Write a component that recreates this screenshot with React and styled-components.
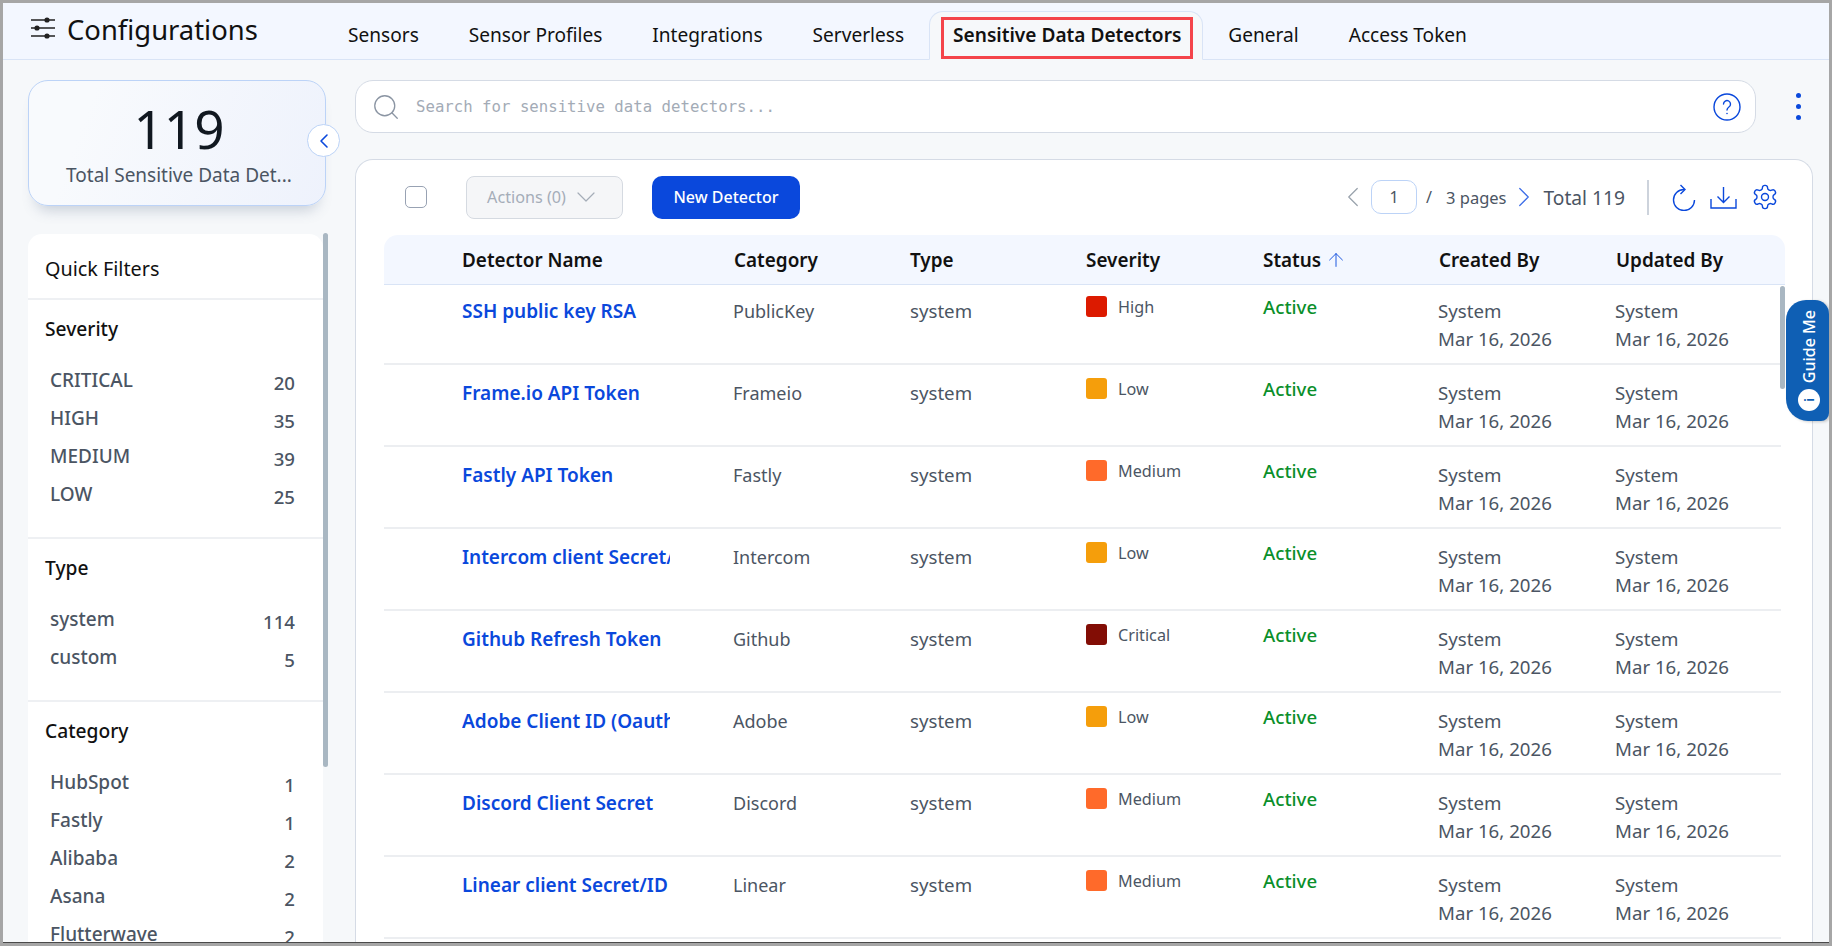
import React from 'react'
import styled, { createGlobalStyle } from 'styled-components'
import { ChevronLeft, ChevronRight, ChevronDown, Search, ArrowUp } from 'lucide-react'

const BLUE = '#0a48dc'
const LINE = '#d5dbe5'

const GlobalStyle = createGlobalStyle`
  html, body { margin: 0; padding: 0; height: 100%; overflow: hidden; }
  body { font-family: "Noto Sans", sans-serif; color: #111; }
  * { box-sizing: border-box; }
`

const Frame = styled.div`
  width: 1832px;
  height: 946px;
  border: 3px solid #a6a6a6;
  background: #f6f8fa;
  display: flex;
  flex-direction: column;
  overflow: hidden;
  position: relative;
`

const BottomEdge = styled.div`
  position: absolute;
  left: 0;
  right: 0;
  bottom: 0;
  height: 1px;
  background: #4a4a4a;
`

const Header = styled.header`
  flex: none;
  height: 57px;
  background: #f3f7ff;
  border-bottom: 1px solid #d9e4f6;
  display: flex;
  align-items: flex-end;
  padding-left: 27px;
`

const Brand = styled.div`
  width: 293px;
  height: 56px;
  display: flex;
  align-items: flex-start;
  gap: 11px;
  padding-top: 9px;
  font-size: 27.4px;
  line-height: 36px;
  white-space: nowrap;
  svg {
    margin-top: 3px;
  }
`

const Tabs = styled.nav`
  display: flex;
  align-items: flex-end;
  height: 49px;
`

const Tab = styled.div`
  height: 49px;
  margin-bottom: -1px;
  padding-bottom: 2px;
  display: flex;
  align-items: center;
  justify-content: center;
  padding-left: ${p => (p.$active ? '11px' : '25px')};
  padding-right: ${p => (p.$active ? '9px' : '25px')};
  font-size: 19.1px;
  font-weight: ${p => (p.$active ? 600 : 400)};
  white-space: nowrap;
  ${p =>
    p.$active &&
    `
    background: #f6f8fa;
    border: 1px solid #d9e4f6;
    border-bottom-color: #f6f8fa;
    border-radius: 14px 14px 0 0;
    padding-bottom: 0;
  `}
`

const RedBox = styled.span`
  border: 3px solid #f4444a;
  height: 42px;
  margin-top: 4px;
  padding: 0 9px 3px 9px;
  display: flex;
  align-items: center;
  line-height: 1;
`

const Body = styled.div`
  flex: 1;
  min-height: 0;
  display: flex;
  padding: 20px 17px 0 25px;
  gap: 26px;
`

const Side = styled.aside`
  width: 301px;
  flex: none;
  display: flex;
  flex-direction: column;
  position: relative;
`

const TotalCard = styled.div`
  width: 298px;
  height: 126px;
  flex: none;
  border: 1px solid #bcd3f7;
  border-radius: 20px;
  background: linear-gradient(110deg, #f8fafd 20%, #eef2fc 100%);
  box-shadow: 0 12px 14px -8px rgba(90, 110, 140, 0.3);
  display: flex;
  flex-direction: column;
  align-items: center;
  padding: 14px 0 0 4px;
`

const TotalNumber = styled.div`
  font-size: 53px;
  line-height: 68px;
  color: #111820;
`

const TotalLabel = styled.div`
  font-size: 19px;
  line-height: 24px;
  color: #4b5563;
`

const Collapse = styled.button`
  position: absolute;
  left: 279px;
  top: 44px;
  width: 33px;
  height: 33px;
  border-radius: 50%;
  border: 1px solid #bcd3f7;
  background: #fff;
  color: ${BLUE};
  display: flex;
  align-items: center;
  justify-content: center;
  padding: 0;
`

const FilterPanel = styled.div`
  margin-top: 28px;
  width: 295px;
  flex: 1;
  min-height: 0;
  background: #fff;
  border-radius: 14px 14px 0 0;
  overflow: hidden;
`

const SideThumb = styled.div`
  position: absolute;
  left: 295px;
  top: 153px;
  width: 5px;
  height: 534px;
  background: #a9b7c2;
  border-radius: 3px;
`

const QuickTitle = styled.div`
  height: 66px;
  padding: 23px 0 0 17px;
  font-size: 19.8px;
  line-height: 24px;
  border-bottom: 2px solid #eef0f3;
`

const FilterGroup = styled.section`
  padding: 17px 28px 0 17px;
  height: ${p => p.$height}px;
  border-bottom: 2px solid #eef0f3;
`

const GroupTitle = styled.div`
  font-size: 19.2px;
  font-weight: 500;
  line-height: 24px;
  margin-bottom: 27px;
`

const FilterRow = styled.div`
  display: flex;
  justify-content: space-between;
  height: 38px;
  padding-left: 5px;
  font-size: 19px;
  font-weight: 500;
  line-height: 24px;
  color: #4b5563;
`

const Count = styled.span`
  font-size: 18.6px;
  padding-top: 3px;
`

const Main = styled.main`
  flex: 1;
  min-width: 0;
  display: flex;
  flex-direction: column;
`

const SearchRow = styled.div`
  display: flex;
  align-items: center;
  flex: none;
`

const SearchBar = styled.div`
  width: 1401px;
  height: 53px;
  border: 1px solid ${LINE};
  border-radius: 18px;
  background: #fff;
  display: flex;
  align-items: center;
  padding: 0 14px 0 15px;
  color: #8b95a3;
`

const Placeholder = styled.span`
  flex: 1;
  margin-left: 15px;
  font-family: "DejaVu Sans Mono", monospace;
  font-size: 15.7px;
  color: #a3abb6;
`

const Dots = styled.div`
  margin-left: 40px;
  display: flex;
  flex-direction: column;
  gap: 6px;
  i {
    width: 5px;
    height: 5px;
    border-radius: 50%;
    background: ${BLUE};
  }
`

const TableCard = styled.div`
  margin-top: 26px;
  width: 1458px;
  flex: 1;
  min-height: 0;
  background: #fff;
  border: 1px solid ${LINE};
  border-bottom: 0;
  border-radius: 18px 18px 0 0;
  padding: 0 27px 0 28px;
  overflow: hidden;
  position: relative;
`

const Toolbar = styled.div`
  height: 75px;
  display: flex;
  align-items: center;
  padding-bottom: 1px;
`

const Checkbox = styled.span`
  width: 22px;
  height: 22px;
  margin-left: 21px;
  border: 1px solid #98a2b3;
  border-radius: 5px;
`

const ActionsButton = styled.div`
  width: 157px;
  height: 43px;
  margin-left: 39px;
  border: 1px solid #d5dae1;
  border-radius: 8px;
  background: #f5f6f8;
  color: #a5adb8;
  font-size: 16.2px;
  display: flex;
  align-items: center;
  justify-content: center;
  gap: 4px;
`

const NewButton = styled.div`
  width: 148px;
  height: 43px;
  margin-left: 29px;
  border-radius: 10px;
  background: ${BLUE};
  color: #fff;
  font-size: 16px;
  font-weight: 500;
  display: flex;
  align-items: center;
  justify-content: center;
`

const Pager = styled.div`
  margin-left: auto;
  display: flex;
  align-items: center;
  color: #4b5563;
  svg.chevron {
    margin: 0 -7px;
  }
`

const PageInput = styled.span`
  width: 46px;
  height: 34px;
  margin: 0 9px 0 8px;
  border: 1px solid #bcd3f7;
  border-radius: 10px;
  font-size: 16px;
  display: flex;
  align-items: center;
  justify-content: center;
`

const Slash = styled.span`
  font-size: 16.2px;
  margin-right: 14px;
`

const PagesText = styled.span`
  font-size: 16.5px;
  margin-right: 7px;
`

const TotalText = styled.span`
  font-size: 19.2px;
  margin-left: 10px;
`

const Divider = styled.span`
  width: 2px;
  height: 35px;
  background: #cdd3dc;
  margin: 0 23px 0 22px;
`

const IconGroup = styled.div`
  display: flex;
  align-items: center;
  gap: 14px;
  margin-right: 6px;
`

const COLUMNS = '78px 272px 176px 176px 177px 176px 177px 1fr'

const HeadRow = styled.div`
  display: grid;
  grid-template-columns: ${COLUMNS};
  height: 50px;
  align-items: center;
  background: #f3f7ff;
  border-bottom: 1px solid #d9e4f6;
  border-radius: 14px 14px 0 0;
  font-size: 18.9px;
  font-weight: 600;
`

const HeadCell = styled.div`
  grid-column: ${p => p.$col};
  display: flex;
  align-items: center;
  gap: 4px;
`

const Row = styled.div`
  display: grid;
  grid-template-columns: ${COLUMNS};
  width: 1397px;
  height: 82px;
  border-bottom: 2px solid #eceef1;
  font-size: 18.67px;
  line-height: 28px;
  color: #4b5563;
  padding-top: 14px;
  ${HeadRow} + & {
    height: 80px;
    padding-top: 12px;
  }
`

const NameCell = styled.div`
  grid-column: 2;
  width: 208px;
  color: ${BLUE};
  font-size: 19px;
  font-weight: 600;
  white-space: nowrap;
  overflow: hidden;
`

const CategoryCell = styled.div`
  font-size: 18px;
  margin-left: -1px;
`

const SeverityCell = styled.div`
  display: flex;
  align-items: flex-start;
  gap: 11px;
  font-size: 16.2px;
  line-height: 22px;
  color: #4b5563;
  margin-top: -1px;
`

const Swatch = styled.span`
  width: 21px;
  height: 21px;
  border-radius: 3px;
  background: ${p => p.$color};
`

const Status = styled.div`
  color: #0a8f2a;
  font-weight: 500;
  margin-top: -4px;
`

const PersonCell = styled.div`
  margin-left: -1px;
`

const TableThumb = styled.div`
  position: absolute;
  right: 27px;
  top: 126px;
  width: 5px;
  height: 103px;
  background: #a9b7c2;
  border-radius: 3px;
`

const GuideMe = styled.div`
  position: absolute;
  right: 0;
  top: 297px;
  width: 43px;
  height: 121px;
  padding: 10px 0 0 3px;
  background: #0f5fb4;
  border-radius: 20px 14px 8px 22px;
  box-shadow: 2px 1px 3px rgba(0, 0, 0, 0.2);
  color: #fff;
  display: flex;
  flex-direction: column;
  align-items: center;
  gap: 6px;
`

const GuideLabel = styled.span`
  writing-mode: vertical-rl;
  transform: rotate(180deg);
  font-size: 16px;
  font-weight: 500;
  line-height: 20px;
  white-space: nowrap;
`

const InfoDot = styled.span`
  width: 22px;
  height: 22px;
  flex: none;
  border-radius: 50%;
  background: #fff;
  color: #0f5fb4;
  font-size: 12px;
  font-weight: 700;
  display: flex;
  align-items: center;
  justify-content: center;
  transform: rotate(-90deg);
`

const SEVERITY = {
  High: '#dc1a00',
  Low: '#f59e0b',
  Medium: '#ff6a2a',
  Critical: '#820d05',
}

const DETECTORS = [
  ['SSH public key RSA', 'PublicKey', 'High'],
  ['Frame.io API Token', 'Frameio', 'Low'],
  ['Fastly API Token', 'Fastly', 'Medium'],
  ['Intercom client Secret/ID', 'Intercom', 'Low'],
  ['Github Refresh Token', 'Github', 'Critical'],
  ['Adobe Client ID (Oauth)', 'Adobe', 'Low'],
  ['Discord Client Secret', 'Discord', 'Medium'],
  ['Linear client Secret/ID', 'Linear', 'Medium'],
]

const FILTERS = [
  { title: 'Severity', height: 239, items: [['CRITICAL', 20], ['HIGH', 35], ['MEDIUM', 39], ['LOW', 25]] },
  { title: 'Type', height: 163, items: [['system', 114], ['custom', 5]] },
  {
    title: 'Category',
    height: 300,
    items: [['HubSpot', 1], ['Fastly', 1], ['Alibaba', 2], ['Asana', 2], ['Flutterwave', 2]],
  },
]

const TABS = ['Sensors', 'Sensor Profiles', 'Integrations', 'Serverless', 'Sensitive Data Detectors', 'General', 'Access Token']

const SlidersIcon = () => (
  <svg width="26" height="26" viewBox="0 0 26 26" fill="none" stroke="#222" strokeWidth="1.6">
    <path d="M1 5h24M1 13h24M1 21h24" />
    <circle cx="17" cy="5" r="1.8" fill="#222" />
    <circle cx="7" cy="13" r="1.8" fill="#222" />
    <circle cx="17" cy="21" r="1.8" fill="#222" />
  </svg>
)

const HelpIcon = () => (
  <svg width="28" height="28" viewBox="0 0 28 28" fill="none" stroke={BLUE} strokeWidth="1.4">
    <circle cx="14" cy="14" r="13" />
    <path d="M10.5 11a3.5 3.5 0 1 1 5.4 3c-1.2.8-1.9 1.5-1.9 3" strokeLinecap="round" />
    <circle cx="14" cy="20.5" r="0.8" fill={BLUE} stroke="none" />
  </svg>
)

const RefreshIcon = () => (
  <svg width="24" height="27" viewBox="0 0 24 27" fill="none" stroke={BLUE} strokeWidth="1.4">
    <path d="M12 5.5A10.5 10.5 0 1 0 22.5 16" />
    <path d="M8.5 1l4.5 4.5L8.5 10" />
  </svg>
)

const DownloadIcon = () => (
  <svg width="27" height="23" viewBox="0 0 27 23" fill="none" stroke={BLUE} strokeWidth="1.4">
    <path d="M1 13v9h25v-9" />
    <path d="M13.5 1v15M7.5 10.5l6 6 6-6" />
  </svg>
)

const GearIcon = () => (
  <svg width="28" height="28" viewBox="0 0 24 24" fill="none" stroke={BLUE} strokeWidth="1.2" strokeLinejoin="round">
    <path d="M12.22 2h-.44a2 2 0 0 0-2 2v.18a2 2 0 0 1-1 1.73l-.43.25a2 2 0 0 1-2 0l-.15-.08a2 2 0 0 0-2.73.73l-.22.38a2 2 0 0 0 .73 2.73l.15.1a2 2 0 0 1 1 1.72v.51a2 2 0 0 1-1 1.74l-.15.09a2 2 0 0 0-.73 2.73l.22.38a2 2 0 0 0 2.73.73l.15-.08a2 2 0 0 1 2 0l.43.25a2 2 0 0 1 1 1.73V20a2 2 0 0 0 2 2h.44a2 2 0 0 0 2-2v-.18a2 2 0 0 1 1-1.73l.43-.25a2 2 0 0 1 2 0l.15.08a2 2 0 0 0 2.73-.73l.22-.39a2 2 0 0 0-.73-2.73l-.15-.08a2 2 0 0 1-1-1.74v-.5a2 2 0 0 1 1-1.74l.15-.09a2 2 0 0 0 .73-2.73l-.22-.38a2 2 0 0 0-2.73-.73l-.15.08a2 2 0 0 1-2 0l-.43-.25a2 2 0 0 1-1-1.73V4a2 2 0 0 0-2-2z" />
    <circle cx="12" cy="12" r="3" />
  </svg>
)

const App = () => (
  <Frame>
    <GlobalStyle />
    <Header>
      <Brand>
        <SlidersIcon />
        Configurations
      </Brand>
      <Tabs>
        {TABS.map(tab =>
          tab === 'Sensitive Data Detectors' ? (
            <Tab key={tab} $active>
              <RedBox>{tab}</RedBox>
            </Tab>
          ) : (
            <Tab key={tab}>{tab}</Tab>
          )
        )}
      </Tabs>
    </Header>
    <Body>
      <Side>
        <TotalCard>
          <TotalNumber>119</TotalNumber>
          <TotalLabel>Total Sensitive Data Det...</TotalLabel>
        </TotalCard>
        <Collapse>
          <ChevronLeft size={24} strokeWidth={1.6} />
        </Collapse>
        <FilterPanel>
          <QuickTitle>Quick Filters</QuickTitle>
          {FILTERS.map(group => (
            <FilterGroup key={group.title} $height={group.height}>
              <GroupTitle>{group.title}</GroupTitle>
              {group.items.map(([label, count]) => (
                <FilterRow key={label}>
                  <span>{label}</span>
                  <Count>{count}</Count>
                </FilterRow>
              ))}
            </FilterGroup>
          ))}
        </FilterPanel>
        <SideThumb />
      </Side>
      <Main>
        <SearchRow>
          <SearchBar>
            <Search size={30} strokeWidth={1.05} />
            <Placeholder>Search for sensitive data detectors...</Placeholder>
            <HelpIcon />
          </SearchBar>
          <Dots>
            <i />
            <i />
            <i />
          </Dots>
        </SearchRow>
        <TableCard>
          <Toolbar>
            <Checkbox />
            <ActionsButton>
              Actions (0)
              <ChevronDown size={32} strokeWidth={0.9} />
            </ActionsButton>
            <NewButton>New Detector</NewButton>
            <Pager>
              <ChevronLeft className="chevron" size={34} strokeWidth={0.9} color="#9aa3ad" />
              <PageInput>1</PageInput>
              <Slash>/</Slash>
              <PagesText>3 pages</PagesText>
              <ChevronRight className="chevron" size={34} strokeWidth={0.9} color="#3f6fe8" />
              <TotalText>Total 119</TotalText>
              <Divider />
              <IconGroup>
                <RefreshIcon />
                <DownloadIcon />
                <GearIcon />
              </IconGroup>
            </Pager>
          </Toolbar>
          <HeadRow>
            <HeadCell $col={2}>Detector Name</HeadCell>
            <HeadCell $col={3}>Category</HeadCell>
            <HeadCell $col={4}>Type</HeadCell>
            <HeadCell $col={5}>Severity</HeadCell>
            <HeadCell $col={6}>
              Status
              <ArrowUp size={22} strokeWidth={1} color={BLUE} />
            </HeadCell>
            <HeadCell $col={7}>Created By</HeadCell>
            <HeadCell $col={8}>Updated By</HeadCell>
          </HeadRow>
          {DETECTORS.map(([name, category, severity]) => (
            <Row key={name}>
              <NameCell>{name}</NameCell>
              <CategoryCell>{category}</CategoryCell>
              <div>system</div>
              <SeverityCell>
                <Swatch $color={SEVERITY[severity]} />
                {severity}
              </SeverityCell>
              <Status>Active</Status>
              <PersonCell>
                System
                <br />
                Mar 16, 2026
              </PersonCell>
              <PersonCell>
                System
                <br />
                Mar 16, 2026
              </PersonCell>
            </Row>
          ))}
          <TableThumb />
        </TableCard>
      </Main>
    </Body>
    <GuideMe>
      <GuideLabel>Guide Me</GuideLabel>
      <InfoDot>i</InfoDot>
    </GuideMe>
    <BottomEdge />
  </Frame>
)

export default App
